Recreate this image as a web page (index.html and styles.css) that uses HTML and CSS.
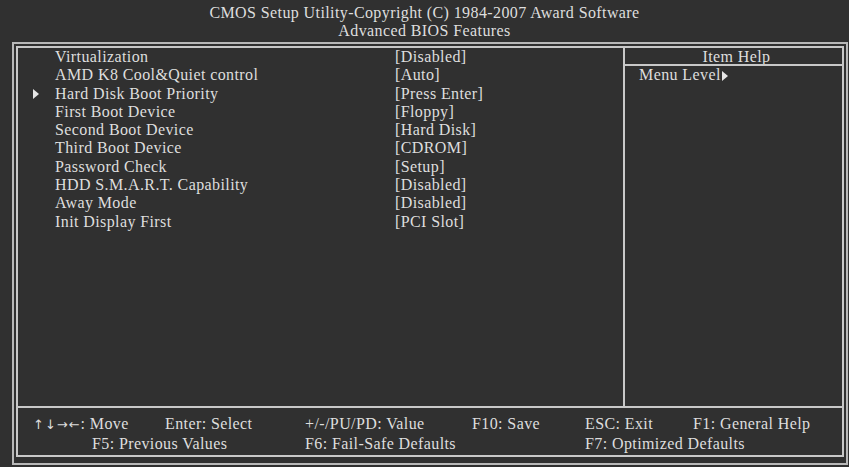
FILE: index.html
```html
<!DOCTYPE html>
<html lang="en">
<head>
    <meta charset="UTF-8">
    <title>CMOS Setup Utility - Advanced BIOS Features</title>
    <link rel="stylesheet" href="styles.css">
</head>
<body>
    <div class="title">
        <div>CMOS Setup Utility-Copyright (C) 1984-2007 Award Software</div>
        <div>Advanced BIOS Features</div>
    </div>

    <div class="frame">
        <div class="panel">
            <div class="main">
                <div class="items">
                    <span class="mark"></span><span>Virtualization</span><span>[Disabled]</span>
                    <span class="mark"></span><span>AMD K8 Cool&amp;Quiet control</span><span>[Auto]</span>
                    <span class="mark"><i class="tri"></i></span><span>Hard Disk Boot Priority</span><span>[Press Enter]</span>
                    <span class="mark"></span><span>First Boot Device</span><span>[Floppy]</span>
                    <span class="mark"></span><span>Second Boot Device</span><span>[Hard Disk]</span>
                    <span class="mark"></span><span>Third Boot Device</span><span>[CDROM]</span>
                    <span class="mark"></span><span>Password Check</span><span>[Setup]</span>
                    <span class="mark"></span><span>HDD S.M.A.R.T. Capability</span><span>[Disabled]</span>
                    <span class="mark"></span><span>Away Mode</span><span>[Disabled]</span>
                    <span class="mark"></span><span>Init Display First</span><span>[PCI Slot]</span>
                </div>
                <div class="help">
                    <div class="help-title">Item Help</div>
                    <div class="help-body">Menu Level<i class="tri small"></i></div>
                </div>
            </div>
            <div class="keys">
                <span class="k-move"><span class="arrows">↑↓→←</span>: Move</span>
                <span class="k-enter">Enter: Select</span>
                <span class="k-value">+/-/PU/PD: Value</span>
                <span class="k-save">F10: Save</span>
                <span class="k-esc">ESC: Exit</span>
                <span class="k-help">F1: General Help</span>
                <span class="k-prev">F5: Previous Values</span>
                <span class="k-value">F6: Fail-Safe Defaults</span>
                <span class="k-opt">F7: Optimized Defaults</span>
            </div>
        </div>
    </div>
</body>
</html>
```

FILE: styles.css
```css
body {
    margin: 0;
    background-color: #303030;
    color: #dedede;
    font-family: "Liberation Serif", "Times New Roman", serif;
    font-size: 16px;
    letter-spacing: 0.4px;
    width: 849px;
    height: 467px;
    overflow: hidden;
}

.title {
    text-align: center;
    line-height: 18px;
    padding-top: 4px;
    height: 38px;
}

.frame {
    margin-left: 12px;
    width: 828px;
    height: 415px;
    border: 2px solid #b8b8b8;
    padding: 2px;
}

.panel {
    height: 407px;
    border: 2px solid #c8c8c8;
    display: flex;
    flex-direction: column;
}

.main {
    display: flex;
    height: 358px;
    border-bottom: 2px solid #c8c8c8;
}

.items {
    width: 605px;
    display: grid;
    grid-template-columns: 22px 340px 1fr;
    grid-auto-rows: 18.3px;
    align-content: start;
    padding-left: 15px;
    box-sizing: border-box;
    line-height: 18px;
}

.mark {
    display: flex;
    align-items: center;
}

.tri {
    display: inline-block;
    width: 0;
    height: 0;
    border-top: 5px solid transparent;
    border-bottom: 5px solid transparent;
    border-left: 6px solid #e6e6e6;
}

.tri.small {
    margin-left: 1px;
    vertical-align: -1px;
}

.help {
    flex: 1;
    border-left: 2px solid #c8c8c8;
}

.help-title {
    height: 16px;
    line-height: 17px;
    text-align: center;
    border-bottom: 2px solid #c8c8c8;
    padding-left: 6px;
    overflow: hidden;
}

.help-body {
    padding-left: 14px;
    line-height: 18px;
}

.keys {
    display: grid;
    grid-template-columns: 59px 73px 140px 167px 113px 108px 1fr;
    grid-auto-rows: 20px;
    padding: 6px 0 0 15px;
    line-height: 20px;
}

.arrows {
    font-family: "DejaVu Sans", sans-serif;
    font-size: 13px;
    letter-spacing: 1px;
}

.k-move { grid-column: 1 / 3; }
.k-prev { grid-column: 2 / 4; }
.k-enter { grid-column: 3; }
.k-value { grid-column: 4; }
.k-save { grid-column: 5; }
.k-esc { grid-column: 6; }
.k-help { grid-column: 7; }
.k-opt { grid-column: 6 / 8; }
```
